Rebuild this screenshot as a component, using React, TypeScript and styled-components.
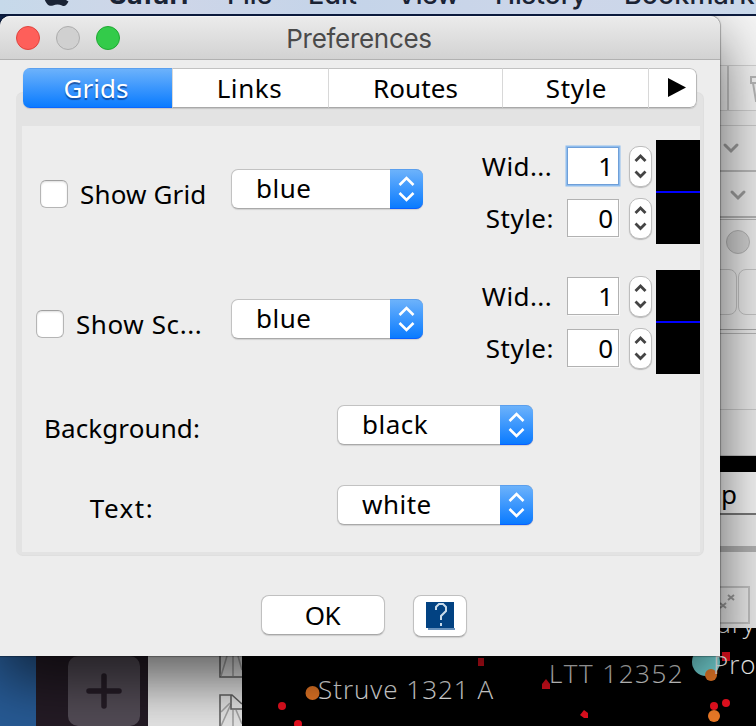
import React from 'react';
import styled, { createGlobalStyle } from 'styled-components';

const GlobalStyle = createGlobalStyle`
  * { box-sizing: border-box; }
  html, body { margin: 0; background: #000; overflow: hidden; }
`;

const Screen = styled.div`
  position: relative;
  display: flex;
  flex-direction: column;
  width: 756px;
  height: 726px;
  overflow: hidden;
  background: #0b1a3c;
  color: #000;
  font: 26px/32px 'Noto Sans', 'Open Sans', sans-serif;
  white-space: nowrap;
`;

/* Menu bar */
const MenuBar = styled.div`
  position: relative;
  flex: none;
  height: 14px;
  overflow: hidden;
  background: linear-gradient(90deg, #c6d9ea 0, #cfd6e8 20%, #c4d4e9 45%, #cdd6e9 75%, #c9d8ea 100%);
`;
const MenuItem = styled.span<{ $x: number; $bold?: boolean; $ls?: number }>`
  position: absolute;
  left: ${(p) => p.$x}px;
  top: -21px;
  color: #1a2334;
  font: ${(p) => (p.$bold ? 700 : 500)} 27px/32px Inter, sans-serif;
  letter-spacing: ${(p) => p.$ls ?? 0}px;
`;
const AppleMark = styled.svg`
  position: absolute;
  left: 43px;
  top: -21px;
`;

/* Windows behind the dialog */
const Backdrop = styled.div`
  display: flex;
  flex: none;
  margin-top: 2px;
  height: 710px;
`;
const Wallpaper = styled.div`
  width: 36px;
  background: linear-gradient(#10244c, #275a94 600px);
`;
const Dock = styled.div`
  display: flex;
  flex-direction: column;
  justify-content: flex-end;
  align-items: center;
  width: 112px;
  padding-left: 24px;
  background: #241b25;
`;
const AddButton = styled.div`
  display: grid;
  place-items: center;
  width: 72px;
  height: 70px;
  border-radius: 10px;
  background: #534c56;
`;
const Page = styled.div`
  display: flex;
  flex-direction: column;
  justify-content: flex-end;
  align-items: flex-end;
  width: 94px;
  background: #e6e6e6;
`;
const MapWindow = styled.div`
  display: flex;
  flex-direction: column;
  width: 514px;
  background: #efefef;
`;
const Band = styled.div<{ $h: number; $bg?: string; $line?: string; $lw?: number }>`
  display: flex;
  flex: none;
  height: ${(p) => p.$h}px;
  padding-left: 478px;
  overflow: hidden;
  background: ${(p) => p.$bg ?? '#eaeaea'};
  border-bottom: ${(p) => p.$lw ?? 0}px solid ${(p) => p.$line ?? '#bbb'};
`;
const ToolCell = styled.div`
  flex: none;
  width: 9px;
  height: 44px;
  border-right: 2px solid #c6c6c6;
`;
const Knob = styled.div`
  flex: none;
  width: 24px;
  height: 24px;
  margin: 10px 0 0 6px;
  border: 1px solid #b2b2b2;
  border-radius: 50%;
  background: #cfcfcf;
`;
const Pill = styled.div<{ $w: number; $ml: number }>`
  flex: none;
  width: ${(p) => p.$w}px;
  height: 46px;
  margin-left: ${(p) => p.$ml}px;
  border: 1.5px solid #c2c2c2;
  border-radius: 8px;
`;
const FieldText = styled.span`
  margin-top: 6px;
  margin-left: 1px;
`;
const StarMap = styled.div`
  position: relative;
  flex: 1;
  overflow: hidden;
  background: #000;
`;
const Stars = styled.svg`
  display: block;
`;
const StarName = styled.span<{ $x: number; $y: number; $ls?: number }>`
  position: absolute;
  left: ${(p) => p.$x}px;
  top: ${(p) => p.$y}px;
  color: #f4f4f4;
  font: 300 26px/32px 'Open Sans', 'Noto Sans', sans-serif;
  letter-spacing: ${(p) => p.$ls ?? 1}px;
`;

/* Dialog */
const Dialog = styled.div`
  position: absolute;
  left: 0;
  top: 16px;
  display: flex;
  flex-direction: column;
  width: 720px;
  height: 640px;
  border-radius: 10px 10px 0 0;
  background: #ededed;
  box-shadow: 0 0 1px 1px rgba(0, 0, 0, 0.28), 0 24px 60px rgba(0, 0, 0, 0.62);
  clip-path: inset(0 -60px -100px 0);
`;
const TitleBar = styled.div`
  display: grid;
  grid-template-columns: 120px 1fr 120px;
  align-items: center;
  flex: none;
  height: 44px;
  border-top: 1px solid #f6f6f6;
  border-bottom: 1px solid #b1b1b1;
  border-radius: 10px 10px 0 0;
  background: linear-gradient(#ebebeb, #d2d2d2);
`;
const Lights = styled.div`
  display: flex;
  gap: 16px;
  padding-left: 16px;
`;
const Light = styled.span<{ $fill: string; $edge: string }>`
  width: 24px;
  height: 24px;
  border: 1px solid ${(p) => p.$edge};
  border-radius: 50%;
  background: ${(p) => p.$fill};
`;
const Title = styled.span`
  justify-self: center;
  margin: 2px 2px 0 0;
  color: #4a4a4a;
  font: 26px/32px Inter, Roboto, sans-serif;
  letter-spacing: -0.3px;
`;
const Tabs = styled.div`
  position: relative;
  z-index: 1;
  display: grid;
  grid-template-columns: 149px 156px 174px 146px 49px;
  flex: none;
  width: 674px;
  height: 40px;
  margin: 8px 0 0 23px;
  border-radius: 7px;
  overflow: hidden;
  box-shadow: 0 1px 1px #c4c4c4;
`;
const Tab = styled.div<{ $on?: boolean; $ls?: number; $shift?: number }>`
  display: flex;
  justify-content: center;
  align-items: center;
  padding-left: ${(p) => Math.max(p.$shift ?? 0, 0)}px;
  padding-right: ${(p) => Math.max(-(p.$shift ?? 0), 0)}px;
  color: ${(p) => (p.$on ? '#fff' : '#000')};
  text-shadow: ${(p) => (p.$on ? '0 2px 1px rgba(0, 40, 110, .6)' : 'none')};
  letter-spacing: ${(p) => p.$ls ?? 0.6}px;
  background: ${(p) => (p.$on ? 'linear-gradient(#6cb2fb, #0a7bff)' : '#fff')};
  border-top: 1px solid ${(p) => (p.$on ? '#5a9fee' : '#c2c2c2')};
  border-bottom: 1px solid ${(p) => (p.$on ? '#0a66ff' : '#a9a9a9')};
  & + & { border-left: 1px solid #d8d8d8; }
  &:last-child { border-right: 1px solid #b8b8b8; border-radius: 0 7px 7px 0; }
`;
const Panel = styled.div`
  display: flex;
  flex-direction: column;
  flex: none;
  width: 688px;
  height: 464px;
  margin: -16px 0 0 16px;
  padding: 33px 3px 3px 6px;
  border: 1px solid #dfdfdf;
  border-width: 1px 1px 1px 0;
  border-radius: 7px;
  background: #e3e3e3;
`;
const Body = styled.div`
  display: flex;
  flex-direction: column;
  flex: 1;
  min-height: 0;
  padding-top: 14px;
  background: #ededed;
`;
const LineRow = styled.div`
  display: grid;
  grid-template-columns: 209px 238px 1fr 44px;
  flex: none;
  height: 104px;
  margin-bottom: 26px;
`;
const CheckLabel = styled.label<{ $ml: number }>`
  display: flex;
  align-items: center;
  gap: 12px;
  height: 28px;
  margin: 40px 0 0 ${(p) => p.$ml}px;
`;
const CheckBox = styled.span`
  width: 28px;
  height: 28px;
  border: 1px solid #b5b5b5;
  border-top-color: #a0a0a0;
  border-radius: 6px;
  background: #fff;
  box-shadow: inset 0 1px 2px #ddd;
`;
const Text = styled.span<{ $ls?: number; $dy?: number; $mr?: number }>`
  letter-spacing: ${(p) => p.$ls ?? 0.5}px;
  margin-top: ${(p) => p.$dy ?? 0}px;
  margin-right: ${(p) => p.$mr ?? 0}px;
`;
const Combo = styled.div<{ $w: number; $mt?: number }>`
  display: flex;
  justify-content: space-between;
  flex: none;
  width: ${(p) => p.$w}px;
  height: 40px;
  margin-top: ${(p) => p.$mt ?? 0}px;
  padding-left: 24px;
  border: 1px solid #c2c2c2;
  border-bottom-color: #a9a9a9;
  border-radius: 7px;
  background: #fff;
  box-shadow: 0 1px 1px #d0d0d0;
`;
const Arrows = styled.span`
  display: grid;
  place-items: center;
  width: 33px;
  height: 40px;
  margin: -1px -1px 0 0;
  border-top: 1px solid #5a9fee;
  border-bottom: 1px solid #0a5fff;
  border-radius: 0 7px 7px 0;
  background: linear-gradient(#6cb2fb, #0a7bff);
`;
const Numbers = styled.div`
  display: flex;
  flex-direction: column;
  gap: 10px;
  padding-top: 5px;
`;
const NumberRow = styled.div`
  display: flex;
  justify-content: flex-end;
  align-items: center;
  height: 42px;
  padding-right: 4px;
`;
const NumberField = styled.span<{ $focus?: boolean }>`
  width: 52px;
  height: 38px;
  margin: 0 10px 0 13px;
  padding: 2px 5px 0 0;
  border: 1px solid ${(p) => (p.$focus ? '#6f9fd8' : '#b2b2b2')};
  background: #fff;
  box-shadow: ${(p) => (p.$focus ? '0 0 0 1.5px #8fbdee' : '1px 1px 0 #f8f8f8')};
  text-align: right;
`;
const Stepper = styled.span`
  display: grid;
  place-items: center;
  width: 23px;
  height: 41px;
  border: 1px solid #bdbdbd;
  border-radius: 10px;
  background: #fff;
  box-shadow: 0 1px 1px #bbb;
`;
const Preview = styled.div`
  display: flex;
  align-items: center;
  height: 104px;
  background: #000;
`;
const PreviewLine = styled.div`
  width: 100%;
  height: 2px;
  background: #00f;
`;
const ColorRow = styled.div`
  display: grid;
  grid-template-columns: 155px 1fr;
  column-gap: 138px;
  flex: none;
  height: 40px;
  margin: 5px 0 35px 22px;
`;
const ColorLabel = styled.div`
  display: flex;
  justify-content: center;
  padding: 7px 0 0 1px;
`;
const Footer = styled.div`
  display: flex;
  gap: 28px;
  margin: 39px 0 0 261px;
`;
const Button = styled.div<{ $w: number; $h: number }>`
  display: grid;
  place-items: center;
  width: ${(p) => p.$w}px;
  height: ${(p) => p.$h}px;
  border: 1px solid #c0c0c0;
  border-bottom-color: #a8a8a8;
  border-radius: 8px;
  background: #fff;
  box-shadow: 0 1px 1px #ccc;
`;

const DoubleChevron = () => (
  <svg width="17" height="26" viewBox="0 0 17 26" fill="none" stroke="#fff" strokeWidth="2.6">
    <path d="M1.5 9 8.5 2 15.5 9M1.5 17l7 7 7-7" />
  </svg>
);
const StepChevrons = () => (
  <svg width="13" height="28" viewBox="0 0 13 28" fill="none" stroke="#444" strokeWidth="2.8">
    <path d="M1.5 9 6.5 4l5 5M1.5 19.500l5 5 5-5" />
  </svg>
);
const DownChevron = ({ x, y }: { x: number; y: number }) => (
  <svg width="36" height="40" fill="none" stroke="#9b9b9b" strokeWidth="3" strokeLinecap="round">
    <path d={`M${x} ${y}l6 6 6-6`} />
  </svg>
);

const LineSettings = ({ label, indent, spacing, focus }: { label: string; indent: number; spacing: number; focus?: boolean }) => (
  <LineRow>
    <CheckLabel $ml={indent}>
      <CheckBox />
      <Text $ls={spacing}>{label}</Text>
    </CheckLabel>
    <Combo $w={192} $mt={29}>
      <Text $dy={2}>blue</Text>
      <Arrows><DoubleChevron /></Arrows>
    </Combo>
    <Numbers>
      <NumberRow>
        <Text $mr={2} $ls={0.4}>Wid...</Text>
        <NumberField $focus={focus}>1</NumberField>
        <Stepper><StepChevrons /></Stepper>
      </NumberRow>
      <NumberRow>
        <Text>Style:</Text>
        <NumberField>0</NumberField>
        <Stepper><StepChevrons /></Stepper>
      </NumberRow>
    </Numbers>
    <Preview><PreviewLine /></Preview>
  </LineRow>
);

const ColorSetting = ({ label, spacing, value }: { label: string; spacing: number; value: string }) => (
  <ColorRow>
    <ColorLabel><Text $ls={spacing}>{label}</Text></ColorLabel>
    <Combo $w={196}>
      <Text $dy={2}>{value}</Text>
      <Arrows><DoubleChevron /></Arrows>
    </Combo>
  </ColorRow>
);

export default function App() {
  return (
    <Screen>
      <GlobalStyle />
      <MenuBar>
        <AppleMark width="26" height="28" viewBox="0 0 26 28">
          <path fill="#1a2334" d="M18 6c3 0 5 1 6.500 3-6 4-5 11 1 13.500C24 26 21.500 28 19 26.500c-3-1.500-6-1.500-9 0C5 28.500 1 22 1 16 1 6 9 4 13.500 7 15 6.500 16 6 18 6z" />
        </AppleMark>
        <MenuItem $x={109} $bold $ls={0.3}>Safari</MenuItem>
        <MenuItem $x={227}>File</MenuItem>
        <MenuItem $x={308}>Edit</MenuItem>
        <MenuItem $x={397} $ls={-0.5}>View</MenuItem>
        <MenuItem $x={495} $ls={-0.2}>History</MenuItem>
        <MenuItem $x={624}>Bookmarks</MenuItem>
      </MenuBar>

      <Backdrop>
        <Wallpaper />
        <Dock>
          <AddButton>
            <svg width="36" height="36" viewBox="0 0 36 36" stroke="#261d27" strokeWidth="5.5" strokeLinecap="round">
              <path d="M3 18h30M18 3v30" />
            </svg>
          </AddButton>
        </Dock>
        <Page>
          <svg width="24" height="70" fill="none" stroke="#646464" strokeWidth="1.6">
            <path d="M2 0v21h22" />
            <path d="M9 0 3 20M15 0v20M20 0l4 14M3 56l9-9M3 70l10-22M15 54v16M18 54l6 14" stroke="#a5a5a5" />
            <path d="M2 70V39h12l10 9M13 39v14h11" />
          </svg>
        </Page>
        <MapWindow>
          <Band $h={50} $bg="#f6f6f6" $lw={1} $line="#d2d2d2" />
          <Band $h={45} $bg="#f2f2f2" $lw={1} $line="#cecece">
            <ToolCell />
            <svg width="28" height="44" fill="none" stroke="#b5b5b5" strokeWidth="2">
              <path d="M28 11h-6v6h6M24 17l3 18h4" />
            </svg>
          </Band>
          <Band $h={15} $lw={1} $line="#c8c8c8" />
          <Band $h={46} $lw={2} $line="#b6b6b6"><DownChevron x={5} y={19} /></Band>
          <Band $h={46} $lw={2} $line="#b0b0b0"><DownChevron x={12} y={20} /></Band>
          <Band $h={2} $lw={1} $line="#b0b0b0" />
          <Band $h={49}><Knob /></Band>
          <Band $h={61} $lw={1} $line="#a5a5a5">
            <Pill $w={26} $ml={-9} />
            <Pill $w={40} $ml={1} />
          </Band>
          <Band $h={4} $lw={1} $line="#b2b2b2" />
          <Band $h={76} $lw={1} $line="#c8c8c8" />
          <Band $h={46} $lw={1} $line="#c0c0c0" />
          <Band $h={16} $bg="#000" />
          <Band $h={43} $bg="#f4f4f4" $lw={2} $line="#777"><FieldText>p</FieldText></Band>
          <Band $h={37} $lw={6} $line="#b0b0b0" />
          <Band $h={76}>
            <svg width="36" height="76" fill="none" stroke="#c0c0c0" strokeWidth="2">
              <path d="M0 35h29v36H0" />
              <path d="m8 43 6 5m0-5-6 5M0 51l6 5m0-5-6 5" stroke="#999" />
            </svg>
          </Band>
          <StarMap>
            <Stars width="514" height="98">
              <circle cx="464" cy="34" r="14" fill="#79dfe0" />
              <g fill="#ed7b27">
                <circle cx="70.5" cy="65" r="7" />
                <circle cx="469" cy="47" r="6" />
                <circle cx="472" cy="88" r="6" />
              </g>
              <g fill="#e8101f">
                <circle cx="40" cy="78" r="4" />
                <circle cx="56" cy="96" r="4" />
                <rect x="236" y="30" width="6" height="8" />
                <path d="m300 56 4-5 4 5v5h-8z" />
                <path d="m338 87 4-5 4 3v5h-4z" />
                <rect x="480" y="24" width="8" height="9" />
                <circle cx="472" cy="78" r="4" />
                <circle cx="484" cy="75" r="4" />
              </g>
            </Stars>
            <StarName $x={76} $y={45}>Struve 1321 A</StarName>
            <StarName $x={307} $y={29} $ls={1.5}>LTT 12352</StarName>
            <StarName $x={471} $y={20}>Proc</StarName>
            <StarName $x={468} $y={-21}>lary</StarName>
          </StarMap>
        </MapWindow>
      </Backdrop>

      <Dialog>
        <TitleBar>
          <Lights>
            <Light $fill="#fe5f5a" $edge="#e0443e" />
            <Light $fill="#d0d0d0" $edge="#adadad" />
            <Light $fill="#33cb4a" $edge="#1fa932" />
          </Lights>
          <Title>Preferences</Title>
        </TitleBar>
        <Tabs>
          <Tab $on $ls={0} $shift={-3}>Grids</Tab>
          <Tab $shift={-2}>Links</Tab>
          <Tab $ls={0.1}>Routes</Tab>
          <Tab $shift={2}>Style</Tab>
          <Tab $shift={9}>
            <svg width="20" height="20" viewBox="0 0 20 20"><path d="M1 0v19l18-9.500z" /></svg>
          </Tab>
        </Tabs>
        <Panel>
          <Body>
            <LineSettings label="Show Grid" indent={18} spacing={0.15} focus />
            <LineSettings label="Show Sc..." indent={14} spacing={0.6} />
            <ColorSetting label="Background:" spacing={0.1} value="black" />
            <ColorSetting label="Text:" spacing={1.5} value="white" />
          </Body>
        </Panel>
        <Footer>
          <Button $w={124} $h={40}>
            <Text $ls={-0.5} $dy={-1} $mr={1}>OK</Text>
          </Button>
          <Button $w={54} $h={42}>
            <svg width="30" height="30" viewBox="0 0 30 30">
              <path fill="#024282" d="M1 1h28v26H1z" />
              <path stroke="#6992bd" strokeWidth="2" d="M3 28h28" />
              <path fill="none" stroke="#c9dbea" strokeWidth="2" d="M11 9V6l3-3h4l3 3v4l-5 5v4M16 22v3" />
            </svg>
          </Button>
        </Footer>
      </Dialog>
    </Screen>
  );
}
